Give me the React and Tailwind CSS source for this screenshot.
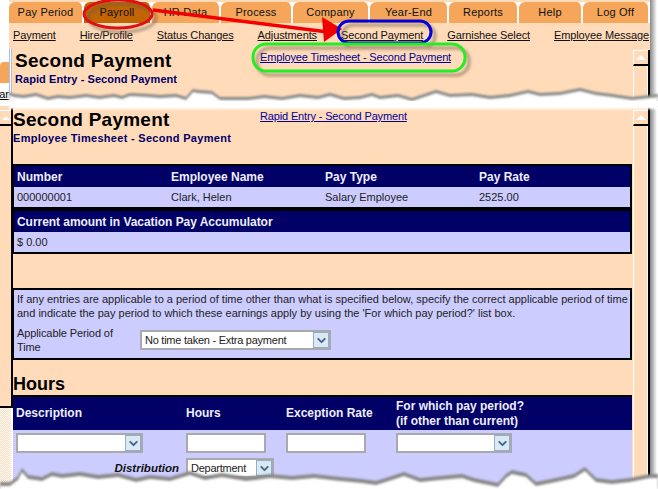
import { ChevronDown } from "lucide-react";

const tabs = [
  { label: "Pay Period", w: "w-[75px]" },
  { label: "Payroll", w: "w-[68px]", active: true },
  { label: "HR Data", w: "w-[69px]" },
  { label: "Process", w: "w-[72px]" },
  { label: "Company", w: "w-[77px]" },
  { label: "Year-End", w: "w-[79px]" },
  { label: "Reports", w: "w-[70px]" },
  { label: "Help", w: "w-[64px]" },
  { label: "Log Off", w: "w-[67px]" },
];

const subNav = ["Payment", "Hire/Profile", "Status Changes", "Adjustments", "Second Payment", "Garnishee Select", "Employee Message"];

// torn paper edges, top and bottom of the two pieces
const tearTop = "M9 92 L14 94 L24 95 L36 93 L48 97 L58 95 L70 96 L86 94 L100 96 L106 95 L114 94 L122 96 L130 93 L148 94 L160 95 L176 94 L186 97 L193 89 L198 90 L212 91 L220 97 L248 97 L264 95 L282 97 L300 94 L318 96 L330 93 L344 97 L360 96 L372 93 L380 96 L398 94 L412 98 L430 92 L436 90 L450 94 L472 93 L490 96 L510 94 L528 90 L540 93 L560 92 L580 88 L596 92 L612 94 L632 97 L650 95";
const tearBottom = "M10 482 L18 476 L22 468 L28 475 L42 477 L52 472 L62 474 L80 472 L98 475 L118 473 L136 478 L150 475 L170 477 L190 471 L205 476 L222 473 L246 477 L270 474 L292 476 L314 474 L340 477 L362 479 L376 481 L392 476 L404 472 L420 478 L440 476 L462 474 L474 478 L498 483 L506 474 L512 470 L526 473 L536 482 L556 478 L574 474 L585 467 L596 478 L612 480 L630 478 L650 474";

function Select({ className, children }) {
  return (
    <div className={`flex h-5 items-center justify-between border-2 border-[#a9a9b0] bg-white pl-[3px] text-[11px] tracking-[-0.25px] text-[#222] ${className}`}>
      <span>{children}</span>
      <span className="flex h-4 w-4 items-center justify-center border border-[#8fb0c8] bg-[#dce9f4] text-[#3d6a8c]">
        <ChevronDown size={13} strokeWidth={3.5} />
      </span>
    </div>
  );
}

function TextBox({ className }) {
  return <div className={`h-5 border-2 border-[#a9a9b0] bg-white ${className}`} />;
}

function ScrollBar({ className }) {
  return (
    <div className={`flex h-full w-[17px] shrink-0 flex-col border-r-2 border-black ${className}`}>
      <div className="flex h-[16px] items-center justify-center border-b-2 border-l border-t border-b-black border-l-white border-t-white">
        <div className="h-0 w-0 border-x-[5px] border-b-[5px] border-x-transparent border-b-white" />
      </div>
      <div className="flex-1 border-x border-white" />
    </div>
  );
}

export default function App() {
  return (
    <div className="relative h-[489px] w-[658px] overflow-hidden bg-white font-['Liberation_Sans',Arial,sans-serif]">
      {/* first piece: tabs and sub nav */}
      <div className="flex h-[106px]">
        <div className="w-[9px] overflow-hidden pt-[62px]">
          <div className="h-[21px] rounded-tl bg-[#f5a65b]" />
          <div className="mt-[4px] flex justify-end text-[11px] leading-[14px] text-black underline">ar</div>
        </div>
        <div className="flex w-[641px] flex-col bg-[#ffdbb9] pt-[2px]">
          <div className="flex h-[21px] bg-white">
            {tabs.map((t) => (
              <div
                key={t.label}
                className={`flex items-center justify-center rounded-t-md border-r-2 border-white text-[11px] tracking-[0.2px] ${t.w} ${t.active ? "bg-[#c06405]" : "bg-[#f5a65b]"} text-[#111]`}
              >
                {t.label}
              </div>
            ))}
          </div>
          <div className="flex h-[24px] items-center justify-between pl-[4px] pr-[1px] text-[11px] tracking-[-0.1px] text-[#111] underline">
            {subNav.map((s) => (
              <span key={s}>{s}</span>
            ))}
          </div>
          <div className="flex h-[56px] pl-[6px] pt-[3px]">
            <div className="w-[245px]">
              <h1 className="text-[19px] font-bold leading-[22px] tracking-[0.25px] text-black">Second Payment</h1>
              <p className="text-[11px] font-bold leading-[14px] tracking-[0.07px] text-[#000066]">Rapid Entry - Second Payment</p>
            </div>
            <a className="text-[11px] leading-[14px] tracking-[-0.15px] text-[#000099] underline">Employee Timesheet - Second Payment</a>
            <ScrollBar className="ml-auto" />
          </div>
        </div>
      </div>

      {/* second piece: timesheet form */}
      <div className="flex h-[383px]">
        <div className="flex h-[302px] w-[13px] shrink-0 flex-col border-b-2 border-r-2 border-black bg-[#ffdbb9] pt-[4px]">
          <div className="flex h-[16px] items-center justify-center border-b-2 border-t border-b-black border-t-white">
            <div className="h-0 w-0 border-x-[4px] border-b-[4px] border-x-transparent border-b-white" />
          </div>
        </div>
        <div className="flex h-[383px] w-[637px] bg-[#ffdbb9]">
          <div className="w-[619px] shrink-0">
            <div className="flex pt-[3px]">
              <div className="w-[247px]">
                <h1 className="text-[19px] font-bold leading-[22px] tracking-[0.25px] text-black">Second Payment</h1>
                <p className="text-[11px] font-bold leading-[14px] tracking-[0.3px] text-[#000066]">Employee Timesheet - Second Payment</p>
              </div>
              <a className="text-[11px] leading-[14px] tracking-[-0.15px] text-[#000099] underline">Rapid Entry - Second Payment</a>
            </div>

            <div className="mt-[19px] border-2 border-l border-black bg-black">
              <div className="grid h-[21px] grid-cols-[154px_154px_154px_1fr] items-center bg-[#000066] pl-[3px] text-[12px] font-bold text-[#eeeeff]">
                <span>Number</span>
                <span>Employee Name</span>
                <span>Pay Type</span>
                <span>Pay Rate</span>
              </div>
              <div className="grid h-[20px] grid-cols-[154px_154px_154px_1fr] items-center bg-[#ccccff] pl-[3px] text-[11px] text-[#222]">
                <span>000000001</span>
                <span>Clark, Helen</span>
                <span>Salary Employee</span>
                <span>2525.00</span>
              </div>
              <div className="mt-[4px] flex h-[21px] items-center bg-[#000066] pl-[3px] text-[12px] font-bold tracking-[-0.05px] text-[#eeeeff]">
                Current amount in Vacation Pay Accumulator
              </div>
              <div className="flex h-[20px] items-center bg-[#ccccff] pl-[3px] text-[11px] text-[#222]">$ 0.00</div>
            </div>

            <div className="mt-[34px] h-[72px] border-2 border-l border-black bg-[#ccccff] pl-[3px] pt-[2px] text-[11px] leading-[14px] text-[#222]">
              <p className="whitespace-nowrap">If any entries are applicable to a period of time other than what is specified below, specify the correct applicable period of time</p>
              <p className="whitespace-nowrap">and indicate the pay period to which these earnings apply by using the 'For which pay period?' list box.</p>
              <div className="mt-[6px] flex items-center">
                <div className="w-[123px] pr-[20px] tracking-[-0.1px]">Applicable Period of Time</div>
                <Select className="w-[191px]">No time taken - Extra payment</Select>
              </div>
            </div>

            <h2 className="mt-[14px] text-[18px] font-bold leading-[20px] text-black">Hours</h2>

            <div className="mt-[1px] bg-[#ccccff]">
              <div className="grid h-[35px] grid-cols-[170px_100px_110px_1fr] items-center border-t-2 border-black bg-[#000066] pl-[3px] text-[12px] font-bold leading-[15px] text-[#eeeeff]">
                <span>Description</span>
                <span>Hours</span>
                <span>Exception Rate</span>
                <span>
                  For which pay period?
                  <br />
                  (if other than current)
                </span>
              </div>
              <div className="grid grid-cols-[170px_100px_110px_1fr] items-center pl-[3px] pt-[3px]">
                <Select className="w-[127px]" />
                <TextBox className="w-[80px]" />
                <TextBox className="w-[80px]" />
                <Select className="w-[116px]" />
              </div>
              <div className="flex h-[45px] items-start pt-[5px]">
                <div className="w-[173px] pr-[7px] pt-[2px] text-right text-[11.5px] font-bold italic text-[#111]">Distribution</div>
                <Select className="w-[88px]">Department</Select>
              </div>
            </div>
          </div>
          <ScrollBar className="ml-[1px] pt-[4px]" />
        </div>
      </div>

      {/* frame of the window behind, top left */}
      <div className="absolute left-[9px] top-[48px] h-[46px] w-[3px] rounded-sm border-x border-[#a8c0e0] bg-white" />
      {/* dithered remainder below the strip on the left */}
      <div className="absolute left-0 top-[408px] h-[81px] w-[11px] bg-[repeating-conic-gradient(#ffdbb9_0_25%,white_0_50%)] bg-[length:2px_2px]" />
      {/* drop shadow along the right edge */}
      <div className="absolute left-[650px] top-0 h-[98px] w-[7px] bg-gradient-to-r from-[#888] to-white" />
      <div className="absolute left-[650px] top-[106px] h-[372px] w-[7px] bg-gradient-to-r from-[#888] to-white" />

      {/* torn edges */}
      <svg className="absolute inset-0" width="658" height="489" viewBox="0 0 658 489" fill="none">
        <defs>
          <filter id="tear" x="-2%" y="-20%" width="104%" height="140%">
            <feGaussianBlur stdDeviation="0.8" />
          </filter>
        </defs>
        <path d={`${tearTop} L658 94 L658 106 L9 106 Z`} fill="#888" filter="url(#tear)" />
        <path d={`${tearTop} L658 94 L658 106 L9 106 Z`} fill="white" transform="translate(0 3)" filter="url(#tear)" />
        <rect x="0" y="101" width="658" height="5" fill="white" />
        <path d={`${tearBottom} L658 474 L658 489 L0 489 L0 482 Z`} fill="#888" filter="url(#tear)" />
        <path d={`${tearBottom} L658 474 L658 489 L0 489 L0 482 Z`} fill="white" transform="translate(0 4)" filter="url(#tear)" />
      </svg>

      {/* call-out marks */}
      <svg className="absolute inset-0" width="658" height="489" viewBox="0 0 658 489" fill="none">
        <defs>
          <filter id="soft" x="-20%" y="-40%" width="140%" height="180%">
            <feGaussianBlur stdDeviation="1.5" />
          </filter>
        </defs>
        <g stroke="#6b5a45" strokeWidth="3" opacity="0.55" filter="url(#soft)" transform="translate(4 4)">
          <ellipse cx="118" cy="14" rx="34" ry="14" />
          <rect x="338" y="21" width="93" height="22" rx="11" />
          <rect x="253" y="44" width="212" height="27" rx="13" />
        </g>
        <ellipse cx="118" cy="14" rx="34" ry="14" stroke="#e01010" strokeWidth="3" />
        <path d="M153 10 L328 32" stroke="#f00000" strokeWidth="3.5" />
        <path d="M322 17 L342 29 L324 42 Z" fill="#f00000" />
        <rect x="338" y="21" width="93" height="22" rx="11" stroke="#0000e0" strokeWidth="3" />
        <rect x="253" y="44" width="212" height="27" rx="13" stroke="#22ee22" strokeWidth="3" />
      </svg>
    </div>
  );
}
